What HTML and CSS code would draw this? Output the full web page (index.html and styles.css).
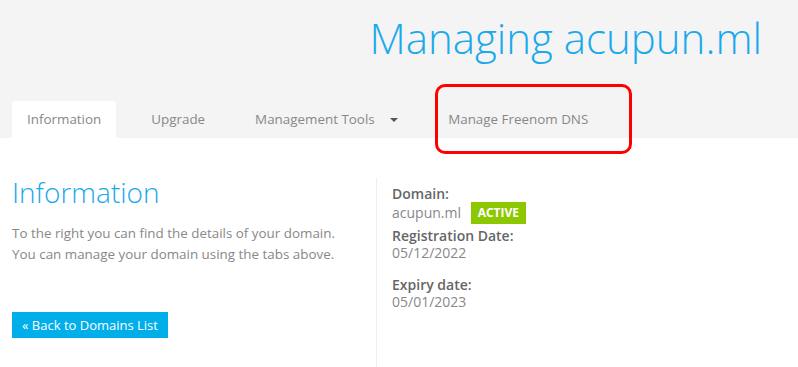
FILE: index.html
```html
<!DOCTYPE html>
<html lang="en">
<head>
  <meta charset="UTF-8">
  <title>Managing acupun.ml</title>
  <link rel="stylesheet" href="styles.css">
</head>
<body>
  <div class="page-header">
    <h1 class="page-title">Managing acupun.ml</h1>
    <ul class="tabs">
      <li class="tab active">Information</li>
      <li class="tab">Upgrade</li>
      <li class="tab">Management Tools <span class="caret"></span></li>
      <li class="tab highlighted">Manage Freenom DNS</li>
    </ul>
  </div>

  <div class="content">
    <div class="col-left">
      <h2 class="section-title">Information</h2>
      <p class="intro">To the right you can find the details of your domain.<br>You can manage your domain using the tabs above.</p>
      <a class="btn-back" href="#">&laquo; Back to Domains List</a>
    </div>
    <div class="col-right">
      <div class="field first">
        <div class="label">Domain:</div>
        <div class="value">acupun.ml <span class="badge">ACTIVE</span></div>
      </div>
      <div class="field">
        <div class="label">Registration Date:</div>
        <div class="value">05/12/2022</div>
      </div>
      <div class="field spaced">
        <div class="label">Expiry date:</div>
        <div class="value">05/01/2023</div>
      </div>
    </div>
  </div>
</body>
</html>
```

FILE: styles.css
```css
/* Base */
body {
  margin: 0;
  font-family: "Open Sans", Arial, sans-serif;
  background: #fff;
  color: #888;
  overflow: hidden;
}

/* Grey header with title and tabs */
.page-header {
  background: #f4f4f4;
  padding: 0 12px;
}

.page-title {
  margin: 0;
  padding: 8px 24px 0 0;
  height: 101px;
  box-sizing: border-box;
  text-align: right;
  font-weight: 300;
  font-size: 42px;
  line-height: 60px;
  color: #1aa9ec;
}

.tabs {
  display: flex;
  list-style: none;
  margin: 0;
  padding: 0;
}

.tab {
  position: relative;
  padding: 0 15px;
  margin-right: 20px;
  height: 37px;
  line-height: 37px;
  font-size: 13.4px;
  color: #888;
  border-radius: 3px 3px 0 0;
}

.tab.active {
  background: #fff;
}

.caret {
  display: inline-block;
  margin-left: 12px;
  vertical-align: middle;
  border-left: 4px solid transparent;
  border-right: 4px solid transparent;
  border-top: 4px solid #555;
}

/* red annotation around the DNS tab */
.tab.highlighted::after {
  content: "";
  position: absolute;
  left: 2px;
  top: -17px;
  right: -29px;
  bottom: -16px;
  border: 3px solid #f00;
  border-radius: 10px;
}

/* Body */
.content {
  display: flex;
  padding: 0 12px;
  height: 229px;
}

.col-left {
  width: 364px;
  padding-top: 37px;
}

.section-title {
  margin: 0;
  font-weight: 300;
  font-size: 28px;
  line-height: 34px;
  color: #1aa9ec;
}

.intro {
  margin: 14px 0 0;
  font-size: 13.4px;
  line-height: 21px;
  color: #888;
}

.btn-back {
  display: inline-block;
  margin-top: 47px;
  padding: 0 10px;
  height: 26px;
  line-height: 26px;
  font-size: 13px;
  color: #fff;
  background: #00aeea;
  text-decoration: none;
}

.col-right {
  margin-top: 40px;
  border-left: 1px solid #eee;
  padding: 7px 0 0 15px;
}

.label {
  font-size: 14px;
  font-weight: 600;
  line-height: 17px;
  color: #666;
}

.value {
  font-size: 14px;
  line-height: 18px;
  color: #888;
}

.field.first {
  margin-bottom: 3px;
}

.field.first .value {
  line-height: 22px;
}

.field.spaced {
  margin-top: 14px;
}

.badge {
  display: inline-block;
  margin-left: 6px;
  padding: 0 7px;
  height: 22px;
  line-height: 22px;
  font-size: 12px;
  font-weight: 700;
  color: #fff;
  background: #8cc700;
  vertical-align: top;
}
```
